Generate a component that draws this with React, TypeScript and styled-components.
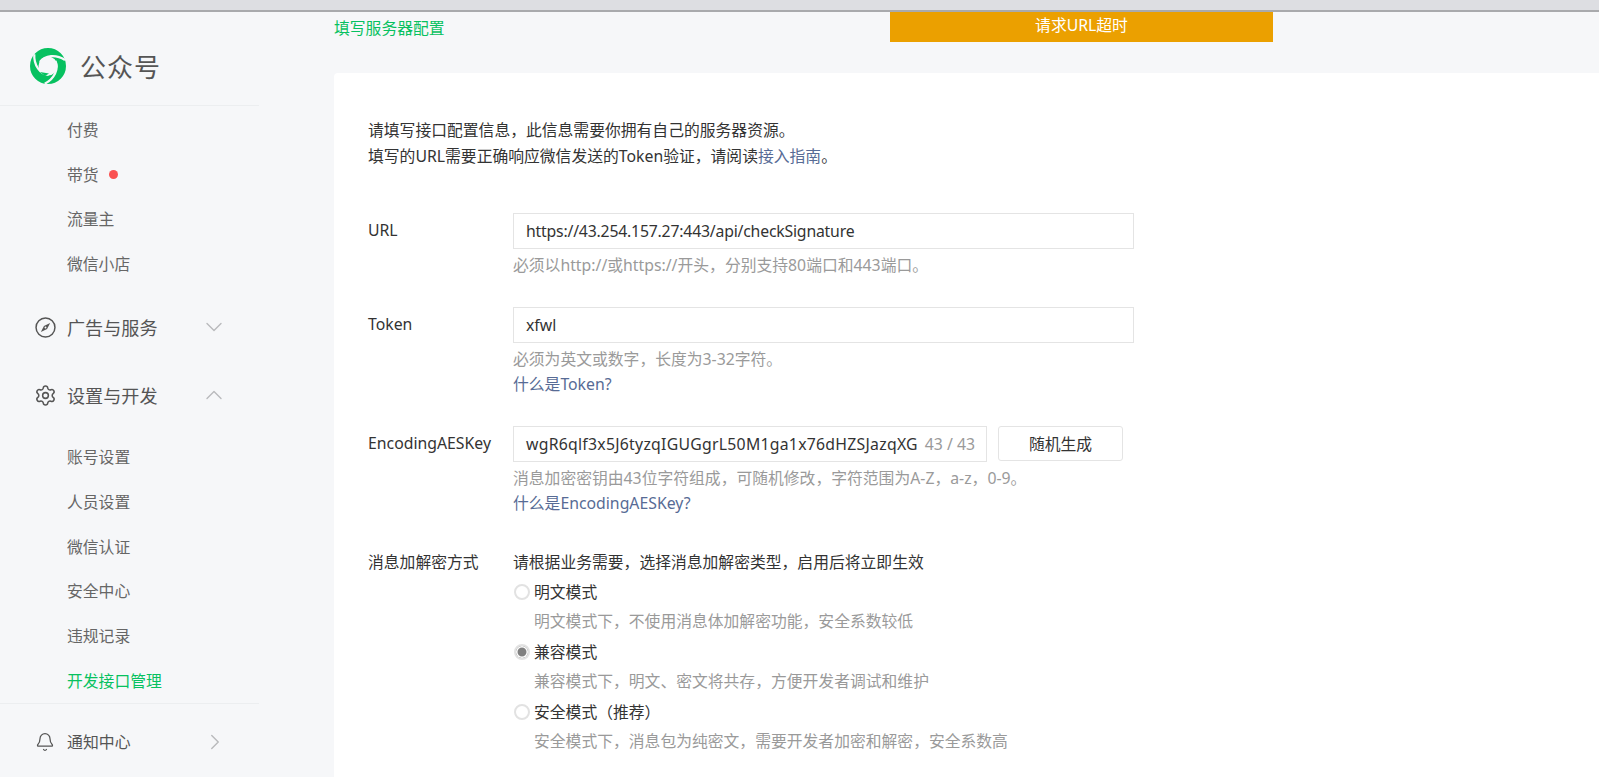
import React from 'react'
import styled, { createGlobalStyle } from 'styled-components'
import { Bell, ChevronDown, ChevronRight, ChevronUp, Settings } from 'lucide-react'

const GlobalStyle = createGlobalStyle`
    html, body {
        margin: 0;
        padding: 0;
        height: 100%;
        overflow: hidden;
        background: #f6f7f9;
    }
    body {
        font-family: "Noto Sans", "Noto Sans CJK SC", sans-serif;
        font-size: 15.8px;
        color: #333;
    }
`

const Page = styled.div`
    display: flex;
    flex-direction: column;
    height: 777px;
    overflow: hidden;
`

const BrowserEdge = styled.div`
    flex: none;
    height: 10px;
    background: #dddee2;
    border-bottom: 2px solid #a9aaad;
`

const Body = styled.div`
    flex: 1;
    display: flex;
    min-height: 0;
`

const Sidebar = styled.aside`
    flex: none;
    width: 259px;
    color: #555;
`

const Brand = styled.div`
    display: flex;
    align-items: center;
    gap: 14px;
    height: 94px;
    padding: 14px 0 0 30px;
    box-sizing: border-box;
    border-bottom: 1px solid #eceef0;
`

const BrandName = styled.span`
    font-size: 26px;
    color: #555;
    letter-spacing: 1px;
`

const SubList = styled.div`
    display: flex;
    flex-direction: column;
    padding-top: 1px;
`

const SubItem = styled.div<{ $active?: boolean }>`
    display: flex;
    align-items: center;
    gap: 10px;
    height: 44.8px;
    padding-left: 67px;
    color: ${(p) => (p.$active ? '#07c160' : '#666')};
`

const RedDot = styled.span`
    width: 9px;
    height: 9px;
    border-radius: 50%;
    background: #fa5151;
`

const GroupList = styled.div`
    padding: 7px 0 4px;
`

const Group = styled.div<{ $small?: boolean }>`
    display: flex;
    align-items: center;
    height: 68px;
    padding-left: 35px;
    color: #555;
    font-size: ${(p) => (p.$small ? '15.9px' : '18.1px')};
`

const GroupIcon = styled.span`
    display: flex;
    width: 32px;
    flex: none;
`

const GroupLabel = styled.span<{ $wide?: boolean }>`
    width: ${(p) => (p.$wide ? 135 : 133)}px;
`

const Chevron = styled.span`
    display: flex;
    color: #b9babc;
`

const GearIcon = styled(Settings)`
    margin: -1px;
`

const Divider = styled.div`
    height: 1px;
    margin-bottom: 4px;
    background: #eceef0;
`

const Main = styled.main`
    flex: 1;
    min-width: 0;
    display: flex;
    flex-direction: column;
    padding-left: 75px;
    position: relative;
`

const Crumb = styled.div`
    flex: none;
    height: 61px;
    padding-top: 5px;
    box-sizing: border-box;
    line-height: 23px;
    color: #07c160;
`

const Toast = styled.div`
    position: absolute;
    top: 0;
    left: 631px;
    width: 383px;
    height: 30px;
    line-height: 26px;
    text-align: center;
    color: #fff;
    background: #eba000;
`

const Card = styled.section`
    flex: 1;
    background: #fff;
    border-top-left-radius: 4px;
    padding: 45px 0 0 34px;
    color: #333;
`

const Intro = styled.p`
    margin: 0 0 44px;
    line-height: 25.5px;
`

const Link = styled.a`
    color: #576b95;
    text-decoration: none;
`

const Row = styled.div<{ $gap?: number }>`
    display: grid;
    grid-template-columns: 145px 1fr;
    margin-bottom: ${(p) => p.$gap ?? 0}px;
`

const Label = styled.div`
    line-height: 34px;
`

const SmallLabel = styled(Label)`
    line-height: 25px;
`

const Field = styled.div<{ $width: number; $tracking?: number }>`
    display: flex;
    align-items: center;
    justify-content: space-between;
    box-sizing: border-box;
    width: ${(p) => p.$width}px;
    height: 36px;
    padding: 0 11px 1px 12px;
    border: 1px solid #e4e4e4;
    white-space: nowrap;
    letter-spacing: ${(p) => p.$tracking ?? 0}px;
`

const Counter = styled.span`
    color: #9a9a9a;
    letter-spacing: 0;
`

const KeyRow = styled.div`
    display: flex;
    gap: 11px;
`

const GenerateButton = styled.button`
    box-sizing: border-box;
    width: 125px;
    height: 35px;
    padding: 0;
    font: inherit;
    color: #333;
    background: #fff;
    border: 1px solid #e4e4e4;
    border-radius: 3px;
`

const Hint = styled.div`
    color: #9a9a9a;
    line-height: 25px;
`

const FieldHint = styled(Hint)`
    margin-top: 4px;
`

const HelpLink = styled(Link)`
    display: block;
    line-height: 25px;
`

const ModeHead = styled.div`
    line-height: 25px;
    margin-bottom: 1px;
`

const RadioRow = styled.label`
    display: flex;
    align-items: center;
    gap: 4px;
    height: 31px;
    padding-left: 1px;
`

const RadioMark = styled.span<{ $on?: boolean }>`
    flex: none;
    box-sizing: border-box;
    width: 16px;
    height: 16px;
    border: 2px solid #e2e2e2;
    border-radius: 50%;
    background: ${(p) => (p.$on ? '#808080' : '#fff')};
    box-shadow: ${(p) => (p.$on ? 'inset 0 0 0 1.5px #fff' : 'none')};
`

const ModeHint = styled(Hint)`
    padding-left: 21px;
    height: 29px;
    line-height: 29px;
`

const CompassIcon = () => (
    <svg width="21" height="21" viewBox="0 0 20 20" fill="none">
        <circle cx="10" cy="10" r="9" stroke="#555" strokeWidth="1.4" />
        <path d="M14.4 5.6 L11.5 11.5 L5.6 14.4 L8.5 8.5 Z" fill="#555" />
        <circle cx="10" cy="10" r="0.9" fill="#f6f7f9" />
    </svg>
)

const SLIT = 'M10 14 C15 7 26 6 35 12'

const Logo = () => (
    <svg width="36" height="36" viewBox="0 0 36 36" fill="none">
        <circle cx="18" cy="18" r="13.75" stroke="#07c160" strokeWidth="8.5" />
        <path d={SLIT} stroke="#f6f7f9" strokeWidth="2.2" />
        <path d={SLIT} stroke="#f6f7f9" strokeWidth="2.2" transform="rotate(120 18 18)" />
        <path d={SLIT} stroke="#f6f7f9" strokeWidth="2.2" transform="rotate(240 18 18)" />
        <path d="M10 24 L19 25.5 L15 28 Z" fill="#07c160" />
    </svg>
)

const MODES = [
    { name: '明文模式', desc: '明文模式下，不使用消息体加解密功能，安全系数较低' },
    { name: '兼容模式', desc: '兼容模式下，明文、密文将共存，方便开发者调试和维护', on: true },
    { name: '安全模式（推荐）', desc: '安全模式下，消息包为纯密文，需要开发者加密和解密，安全系数高' },
]

const App = () => {
    return (
        <Page>
            <GlobalStyle />
            <BrowserEdge />
            <Body>
                <Sidebar>
                    <Brand>
                        <Logo />
                        <BrandName>公众号</BrandName>
                    </Brand>
                    <SubList>
                        <SubItem>付费</SubItem>
                        <SubItem>带货<RedDot /></SubItem>
                        <SubItem>流量主</SubItem>
                        <SubItem>微信小店</SubItem>
                    </SubList>
                    <GroupList>
                        <Group>
                            <GroupIcon><CompassIcon /></GroupIcon>
                            <GroupLabel>广告与服务</GroupLabel>
                            <Chevron><ChevronDown size={28} strokeWidth={1.2} /></Chevron>
                        </Group>
                        <Group>
                            <GroupIcon><GearIcon size={23} strokeWidth={1.6} /></GroupIcon>
                            <GroupLabel>设置与开发</GroupLabel>
                            <Chevron><ChevronUp size={28} strokeWidth={1.2} /></Chevron>
                        </Group>
                    </GroupList>
                    <SubList>
                        <SubItem>账号设置</SubItem>
                        <SubItem>人员设置</SubItem>
                        <SubItem>微信认证</SubItem>
                        <SubItem>安全中心</SubItem>
                        <SubItem>违规记录</SubItem>
                        <SubItem $active>开发接口管理</SubItem>
                    </SubList>
                    <Divider />
                    <Group $small>
                        <GroupIcon><Bell size={20} strokeWidth={1.5} /></GroupIcon>
                        <GroupLabel $wide>通知中心</GroupLabel>
                        <Chevron><ChevronRight size={26} strokeWidth={1.3} /></Chevron>
                    </Group>
                </Sidebar>
                <Main>
                    <Crumb>填写服务器配置</Crumb>
                    <Toast>请求URL超时</Toast>
                    <Card>
                        <Intro>
                            请填写接口配置信息，此信息需要你拥有自己的服务器资源。<br />
                            填写的URL需要正确响应微信发送的Token验证，请阅读<Link href="#">接入指南</Link>。
                        </Intro>
                        <Row $gap={29}>
                            <Label>URL</Label>
                            <div>
                                <Field $width={621} $tracking={-0.2}>https://43.254.157.27:443/api/checkSignature</Field>
                                <FieldHint>必须以http://或https://开头，分别支持80端口和443端口。</FieldHint>
                            </div>
                        </Row>
                        <Row $gap={29}>
                            <Label>Token</Label>
                            <div>
                                <Field $width={621}>xfwl</Field>
                                <FieldHint>必须为英文或数字，长度为3-32字符。</FieldHint>
                                <HelpLink href="#">什么是Token?</HelpLink>
                            </div>
                        </Row>
                        <Row $gap={34}>
                            <Label>EncodingAESKey</Label>
                            <div>
                                <KeyRow>
                                    <Field $width={474} $tracking={0.26}>
                                        wgR6qlf3x5J6tyzqIGUGgrL50M1ga1x76dHZSJazqXG
                                        <Counter>43 / 43</Counter>
                                    </Field>
                                    <GenerateButton>随机生成</GenerateButton>
                                </KeyRow>
                                <FieldHint>消息加密密钥由43位字符组成，可随机修改，字符范围为A-Z，a-z，0-9。</FieldHint>
                                <HelpLink href="#">什么是EncodingAESKey?</HelpLink>
                            </div>
                        </Row>
                        <Row>
                            <SmallLabel>消息加解密方式</SmallLabel>
                            <div>
                                <ModeHead>请根据业务需要，选择消息加解密类型，启用后将立即生效</ModeHead>
                                {MODES.map((mode) => (
                                    <div key={mode.name}>
                                        <RadioRow>
                                            <RadioMark $on={mode.on} />
                                            {mode.name}
                                        </RadioRow>
                                        <ModeHint>{mode.desc}</ModeHint>
                                    </div>
                                ))}
                            </div>
                        </Row>
                    </Card>
                </Main>
            </Body>
        </Page>
    )
}

export default App
